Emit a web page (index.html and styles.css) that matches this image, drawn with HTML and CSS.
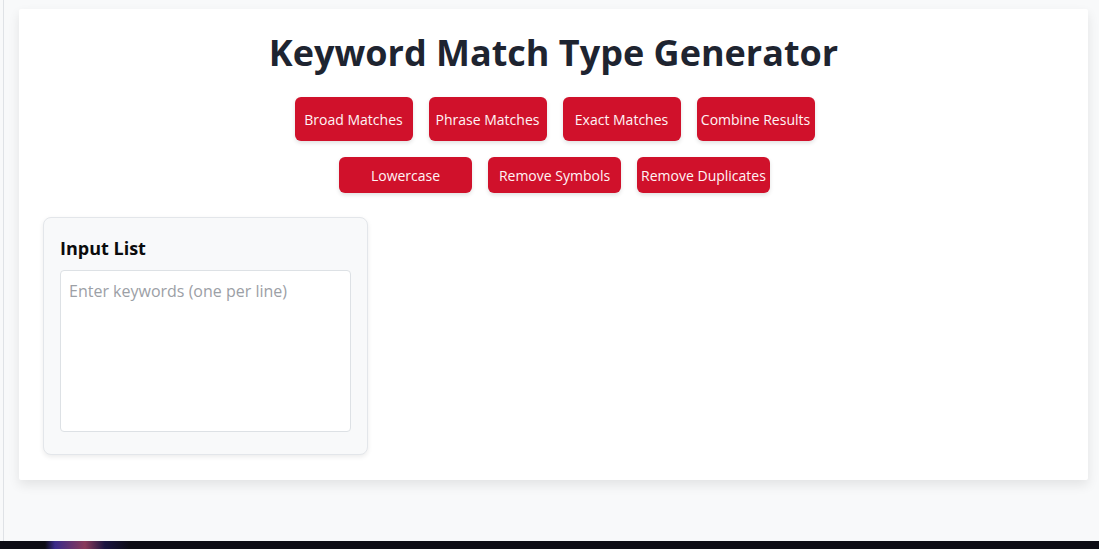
FILE: index.html
```html
<!DOCTYPE html>
<html lang="en">
<head>
<meta charset="utf-8">
<title>Keyword Match Type Generator</title>
<link rel="stylesheet" href="styles.css">
</head>
<body>
<div class="frame">
  <main class="card">
    <h1 class="title">Keyword Match Type Generator</h1>
    <div class="btn-row row-main">
      <button class="btn">Broad Matches</button>
      <button class="btn">Phrase Matches</button>
      <button class="btn">Exact Matches</button>
      <button class="btn">Combine Results</button>
    </div>
    <div class="btn-row row-tools">
      <button class="btn">Lowercase</button>
      <button class="btn">Remove Symbols</button>
      <button class="btn">Remove Duplicates</button>
    </div>
    <section class="panel">
      <h3 class="panel-title">Input List</h3>
      <textarea class="input" placeholder="Enter keywords (one per line)"></textarea>
    </section>
  </main>
</div>
<div class="taskbar"></div>
</body>
</html>
```
FILE: styles.css
```css
html, body {
  margin: 0;
  padding: 0;
}
body {
  background: #f8f9fa;
  font-family: "Open Sans", "Noto Sans", sans-serif;
  overflow: hidden;
}
.frame {
  height: 541px;
  box-sizing: border-box;
  margin-left: 3px;
  border-left: 1px solid #dfe2e6;
  padding-top: 9px;
  padding-left: 15px;
}
.card {
  width: 1069px;
  box-sizing: border-box;
  background: #ffffff;
  border-radius: 2px;
  box-shadow: 0 5px 12px rgba(0, 0, 0, 0.09);
  padding: 19px 24px 25px;
}
.title {
  margin: 0 0 20px;
  text-align: center;
  font-size: 36px;
  font-weight: 700;
  line-height: 49px;
  color: #1e2430;
}
.btn-row {
  display: flex;
  justify-content: center;
  gap: 16px;
  padding-left: 2px;
}
.row-main {
  margin-bottom: 16px;
}
.row-tools {
  margin-bottom: 24px;
}
.btn {
  border: none;
  border-radius: 6px;
  background: #d0112b;
  color: #fff4f5;
  font-family: "Open Sans", "Noto Sans", sans-serif;
  font-size: 14px;
  padding: 0 4px;
  box-shadow: 0 2px 4px rgba(0, 0, 0, 0.12);
  cursor: pointer;
  white-space: nowrap;
}
.row-main .btn {
  width: 118px;
  height: 44px;
}
.row-tools .btn {
  width: 133px;
  height: 36px;
}
.panel {
  width: 325px;
  box-sizing: border-box;
  background: #f8f9fa;
  border: 1px solid #e3e6ea;
  border-radius: 8px;
  box-shadow: 0 2px 5px rgba(0, 0, 0, 0.08);
  padding: 18px 16px 22px;
}
.panel-title {
  margin: 0 0 10px;
  font-size: 18px;
  font-weight: 700;
  line-height: normal;
  color: #0b0b0c;
}
.input {
  display: block;
  width: 291px;
  height: 162px;
  box-sizing: border-box;
  border: 1px solid #dde1e5;
  border-radius: 4px;
  background: #ffffff;
  padding: 8px;
  font-family: "Open Sans", "Noto Sans", sans-serif;
  font-size: 16px;
  line-height: 1.5;
  resize: none;
}
.input::placeholder {
  color: #9ca0a6;
}
.taskbar {
  height: 8px;
  background: linear-gradient(90deg, #0d0c14 0, #0d0c14 45px, #3a2a8a 55px, #8a3a5a 85px, #1a1440 105px, #0d0c14 130px, #0d0c14 100%);
}
```
